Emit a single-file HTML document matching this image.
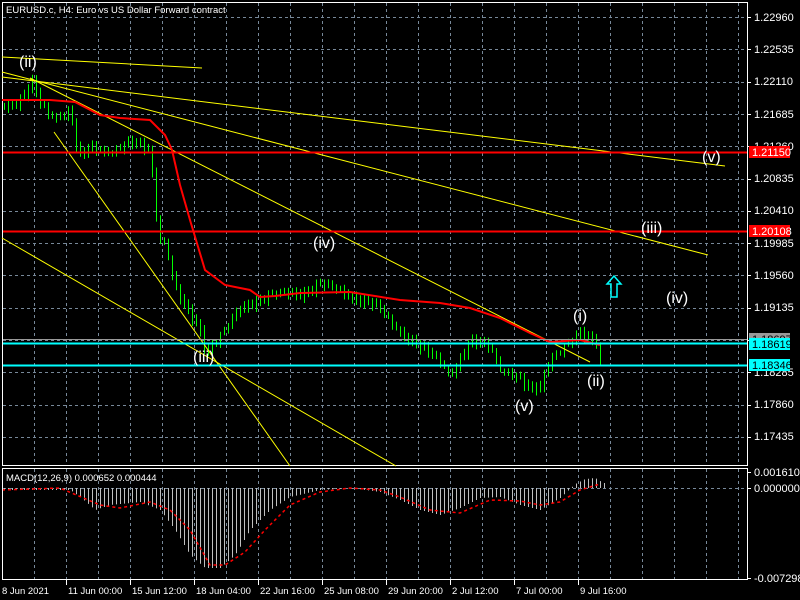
<!DOCTYPE html>
<html><head><meta charset="utf-8"><style>
html,body{margin:0;padding:0;background:#000;width:800px;height:600px;overflow:hidden}
svg{display:block}
text{font-family:"Liberation Sans",sans-serif;font-size:11px;fill:#fff}
text.sm{font-size:9.5px}
text.lbl{font-size:16px;fill:#fff}
</style></head><body>
<svg id="s" width="800" height="600" xmlns="http://www.w3.org/2000/svg">
<defs><clipPath id="cp"><rect x="3" y="3" width="744" height="462"/></clipPath>
<clipPath id="cp2"><rect x="3" y="469" width="744" height="110"/></clipPath></defs>
<path id="grid" fill="none" stroke="#778899" stroke-dasharray="3,3" stroke-width="1"/>
<rect x="2.5" y="2.5" width="745" height="463" fill="none" stroke="#fff"/>
<rect x="2.5" y="468.5" width="745" height="111" fill="none" stroke="#fff"/>
<line x1="3" y1="488.5" x2="747" y2="488.5" stroke="#778899" stroke-dasharray="3,3"/>
<g clip-path="url(#cp2)">
<path id="hist" fill="none" stroke="#c0c0c0" stroke-width="1"/>
<path id="sig" fill="none" stroke="#ff0000" stroke-width="1.5" stroke-dasharray="3,3"/>
</g>
<g clip-path="url(#cp)">
<path id="wick" fill="none" stroke="#00ff00" stroke-width="1"/>
<path id="bear" fill="#000" stroke="#00ff00" stroke-width="1"/>
<path id="bull" fill="#fff" stroke="#00ff00" stroke-width="0.6"/>
</g>
<g stroke="#ffff00" stroke-width="1" fill="none">
<line x1="2" y1="57" x2="202" y2="68"/>
<line x1="2" y1="77" x2="725" y2="166"/>
<line x1="2" y1="72" x2="708" y2="255"/>
<line x1="54" y1="132" x2="290" y2="466"/>
<line x1="2" y1="238" x2="396" y2="466"/>
<line x1="30" y1="78" x2="590" y2="362"/>
</g>
<polyline id="ma" fill="none" stroke="#ff0000" stroke-width="2"/>
<line x1="3" y1="152.5" x2="747" y2="152.5" stroke="#ff0000" stroke-width="2"/>
<line x1="3" y1="231.5" x2="747" y2="231.5" stroke="#ff0000" stroke-width="2"/>
<line x1="3" y1="339.5" x2="747" y2="339.5" stroke="#999"/>
<line x1="3" y1="343.5" x2="747" y2="343.5" stroke="#00ffff" stroke-width="2"/>
<line x1="3" y1="365.5" x2="747" y2="365.5" stroke="#00ffff" stroke-width="2"/>
<path id="ticks" stroke="#fff" fill="none"/>
<g>
<text x="754" y="21">1.22960</text><text x="754" y="53">1.22535</text><text x="754" y="85">1.22110</text>
<text x="754" y="118">1.21685</text><text x="754" y="150">1.21260</text><text x="754" y="182">1.20835</text>
<text x="754" y="214">1.20410</text><text x="754" y="247">1.19985</text><text x="754" y="279">1.19560</text>
<text x="754" y="311">1.19135</text><text x="754" y="376">1.18285</text>
<text x="754" y="408">1.17860</text><text x="754" y="440">1.17435</text>
<text x="754" y="476">0.001610</text><text x="754" y="492">0.000000</text><text x="754" y="582">-0.007298</text>
</g>
<g>
<text class="sm" x="2" y="594">8 Jun 2021</text>
<text class="sm" x="68" y="594">11 Jun 00:00</text>
<text class="sm" x="132" y="594">15 Jun 12:00</text>
<text class="sm" x="196" y="594">18 Jun 04:00</text>
<text class="sm" x="260" y="594">22 Jun 16:00</text>
<text class="sm" x="324" y="594">25 Jun 08:00</text>
<text class="sm" x="388" y="594">29 Jun 20:00</text>
<text class="sm" x="452" y="594">2 Jul 12:00</text>
<text class="sm" x="516" y="594">7 Jul 00:00</text>
<text class="sm" x="580" y="594">9 Jul 16:00</text>
</g>
<text class="sm" x="6" y="13">EURUSD.c, H4:  Euro vs US Dollar Forward contract</text>
<text class="sm" x="6" y="481">MACD(12,26,9) 0.000652 0.000444</text>
<text class="lbl" x="19" y="67">(ii)</text>
<text class="lbl" x="702" y="162">(v)</text>
<text class="lbl" x="641" y="233">(iii)</text>
<text class="lbl" x="313" y="248">(iv)</text>
<text class="lbl" x="666" y="303">(iv)</text>
<text class="lbl" x="573" y="321">(i)</text>
<text class="lbl" x="587" y="386">(ii)</text>
<text class="lbl" x="515" y="411">(v)</text>
<text class="lbl" x="193" y="362">(iii)</text>
<path d="M614 276 L621 284 L617 284 L617 297 L611 297 L611 284 L607 284 Z" fill="none" stroke="#00ffff" stroke-width="1.5"/>
<rect x="749" y="333" width="41" height="12" fill="#999"/>
<text x="752" y="343" style="fill:#000">1.18697</text>
<rect x="749" y="338" width="41" height="12" fill="#00ffff"/>
<text x="752" y="348" style="fill:#000">1.18619</text>
<rect x="749" y="359" width="41" height="12" fill="#00ffff"/>
<text x="752" y="369" style="fill:#000">1.18346</text>
<rect x="749" y="146" width="41" height="12" fill="#ff0000"/>
<text x="752" y="156">1.21150</text>
<rect x="749" y="225" width="41" height="12" fill="#ff0000"/>
<text x="752" y="235">1.20108</text>
</svg>
<script>
function interp(pts,x){for(var i=0;i<pts.length-1;i++){if(x<=pts[i+1][0]){var a=pts[i],b=pts[i+1];return a[1]+(b[1]-a[1])*(x-a[0])/(b[0]-a[0]);}}return pts[pts.length-1][1];}
function r(v){return Math.round(v*10)/10;}
var gd="",td="";
for(var x=34;x<747;x+=32){gd+="M"+(x+.5)+" 3V466M"+(x+.5)+" 469V579";}
for(var i=0;i<14;i++){var y=Math.round(17+i*32.3);gd+="M3 "+(y+.5)+"H747";td+="M747 "+(y+.5)+"H751";}
[472,488,578].forEach(function(y){td+="M747 "+(y+.5)+"H751";});
[66,130,194,258,322,386,450,514,578].forEach(function(x){td+="M"+(x+.5)+" 580V585";});
document.getElementById('grid').setAttribute('d',gd);
document.getElementById('ticks').setAttribute('d',td);
var close=[[2,105],[20,100],[32,85],[40,105],[50,115],[70,110],[78,160],[90,150],[110,148],[130,145],[150,150],[158,235],[165,240],[175,290],[185,310],[200,330],[205,350],[215,340],[225,330],[240,310],[255,300],[270,295],[300,293],[320,285],[340,290],[360,300],[380,310],[400,330],[420,350],[440,360],[450,372],[470,345],[490,345],[500,365],[515,378],[530,392],[540,385],[550,355],[570,345],[580,335],[595,338],[600,358]];
var wd="",bd="",ud="",prev=105;
for(var x=4;x<=600;x+=4){var cl=interp(close,x)+Math.sin(x*1.7)*3+Math.sin(x*0.53)*2;var op=prev;
 var hi=Math.min(op,cl)-1-Math.abs(Math.sin(x*2.3))*5, lo=Math.max(op,cl)+1+Math.abs(Math.cos(x*1.9))*5;
 wd+="M"+(x+.5)+" "+r(hi)+"V"+r(lo);
 var top=Math.min(op,cl),h=Math.max(1,Math.abs(op-cl));
 var rect="M"+(x-.5)+" "+r(top)+"h2v"+r(h)+"h-2z";
 if(cl>op) ud+=rect; else bd+=rect;
 prev=cl;}
document.getElementById('wick').setAttribute('d',wd);
document.getElementById('bear').setAttribute('d',bd);
document.getElementById('bull').setAttribute('d',ud);
var ma=[[2,100],[50,100],[75,102],[100,115],[120,118],[150,120],[165,135],[172,150],[180,185],[190,220],[205,270],[225,285],[250,290],[260,297],[275,296],[300,293],[350,292],[400,300],[440,303],[470,308],[500,318],[530,333],[550,342],[580,340],[600,345]];
document.getElementById('ma').setAttribute('points',ma.map(function(p){return p.join(',')}).join(' '));
var hist=[[2,490],[70,490],[80,497],[95,510],[110,505],[140,502],[160,510],[175,530],[190,555],[205,568],[220,568],[235,555],[250,530],[270,510],[290,497],[320,490],[350,488],[380,492],[400,500],[420,510],[440,515],[460,508],[480,498],[500,497],[520,505],[540,510],[560,498],[575,484],[585,479],[595,478],[603,483]];
var sig=[[2,490],[60,488],[100,505],[120,508],[150,502],[170,510],[190,530],[210,565],[225,565],[245,552],[265,530],[290,505],[320,492],[350,488],[380,490],[400,497],[430,510],[460,513],[490,500],[520,501],[540,505],[560,502],[580,490],[600,484]];
var hd="";for(var x=4;x<=604;x+=4){hd+="M"+(x+.5)+" 488V"+r(interp(hist,x));}
document.getElementById('hist').setAttribute('d',hd);
var sd="M2 490";for(var x=4;x<=600;x+=2){sd+="L"+x+" "+r(interp(sig,x));}
document.getElementById('sig').setAttribute('d',sd);
</script>
</body></html>
